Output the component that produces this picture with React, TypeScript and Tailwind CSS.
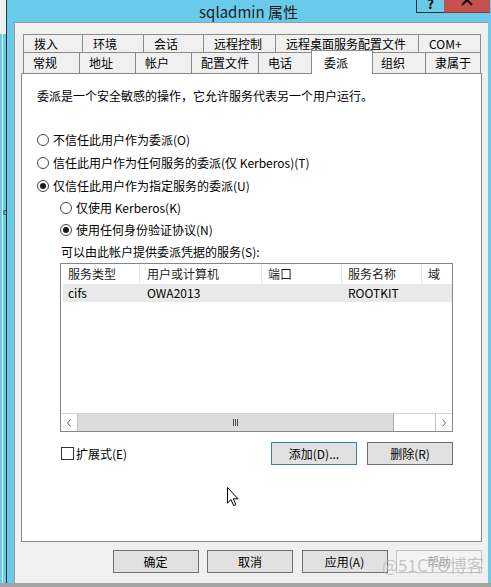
import React from 'react';

const topTabs = [
  { label: '拨入', w: 'w-[59px]' },
  { label: '环境', w: 'w-[61px]' },
  { label: '会话', w: 'w-[60px]' },
  { label: '远程控制', w: 'w-[72px]' },
  { label: '远程桌面服务配置文件', w: 'w-[143px]' },
  { label: 'COM+', w: 'w-[63px] border-r' },
];

const bottomTabs = [
  { label: '常规', w: 'w-[56px]' },
  { label: '地址', w: 'w-[56px]' },
  { label: '帐户', w: 'w-[56px]' },
  { label: '配置文件', w: 'w-[67px]' },
  { label: '电话', w: 'w-[55px]' },
  { label: '委派', w: 'w-[58px]', active: true },
  { label: '组织', w: 'w-[54px]' },
  { label: '隶属于', w: 'w-[56px] border-r' },
];

const Radio: React.FC<{ checked?: boolean; label: string; className?: string }> = ({ checked, label, className }) => (
  <div className={`flex items-center gap-[4px] ${className ?? ''}`}>
    <span className="flex h-[12px] w-[12px] items-center justify-center rounded-full border border-[#444] bg-white">
      {checked && <span className="h-[6px] w-[6px] rounded-full bg-[#1a1a1a]" />}
    </span>
    <span>{label}</span>
  </div>
);

const Button: React.FC<{ label: string; focus?: boolean; disabled?: boolean }> = ({ label, focus, disabled }) => (
  <div
    className={`flex h-[23px] w-[86px] items-center justify-center border ${
      disabled
        ? 'border-[#c4c4c4] bg-[#f4f4f4] text-[#a3a3a3]'
        : focus
          ? 'border-[#3c7fb1] bg-[#e1e1e1]'
          : 'border-[#707070] bg-[#e1e1e1]'
    }`}
  >
    {label}
  </div>
);

export default function App() {
  return (
    <div className="relative flex h-[587px] w-[491px] flex-col overflow-hidden bg-[#67cbe9] font-['Noto_Sans_CJK_SC',sans-serif] text-[12px] leading-none text-black">
      <div className="flex flex-1">
        {/* window behind the dialog */}
        <div className="flex w-[6px] flex-col">
          <div className="h-[34px] bg-[#eef0f2]" />
          <div className="ml-[2px] flex-1 border-l border-[#e9f7fc]">
            <div className="mt-[174px] text-[8px] text-[#222]">c</div>
          </div>
        </div>

        {/* dialog frame */}
        <div className="flex flex-1 flex-col border-l border-[#2d2d2d]">
          {/* title bar */}
          <div className="flex h-[22px]">
            <div className="flex-1" />
            <div className="flex items-center text-[15px] text-[#1b1b1b]">sqladmin 属性</div>
            <div className="flex flex-1 items-start justify-end pr-[1px]">
              <div className="flex h-[13px] w-[28px] justify-center overflow-hidden border-b border-l border-[#2b2b2b]">
                <span className="-mt-[4px] text-[13px] font-bold leading-[16px]">?</span>
              </div>
              <div className="flex h-[13px] w-[46px] justify-center overflow-hidden border-b border-[#8a3a3a] bg-[#c75050]">
                <svg width="12" height="12" viewBox="0 0 12 12" className="-mt-[6px]">
                  <path d="M1 1 L11 11 M11 1 L1 11" stroke="#111" strokeWidth="2.2" />
                </svg>
              </div>
            </div>
          </div>

          {/* client area */}
          <div className="flex flex-1 pl-[7px] pr-[3px]">
            <div className="flex flex-1 flex-col border-l border-t border-[#9c9c9c] bg-[#f0f0f0] px-[6px] pb-[10px] pt-[11px]">
              {/* tabs */}
              <div className="ml-[2px] flex h-[18px]">
                {topTabs.map((t) => (
                  <div key={t.label} className={`flex h-[18px] items-center border-l border-t border-[#8c8c8c] pl-[10px] ${t.w}`}>
                    {t.label}
                  </div>
                ))}
              </div>
              <div className="ml-[2px] flex h-[21px]">
                {bottomTabs.map((t) =>
                  t.active ? (
                    <div key={t.label} className={`relative z-10 h-[21px] ${t.w}`}>
                      <div className="-ml-[2px] -mt-[2px] flex h-[24px] w-[62px] items-center border-l border-r border-t border-[#8c8c8c] bg-white pl-[12px]">
                        {t.label}
                      </div>
                    </div>
                  ) : (
                    <div key={t.label} className={`flex h-[21px] items-center border-l border-t border-[#8c8c8c] pl-[9px] ${t.w}`}>
                      {t.label}
                    </div>
                  ),
                )}
              </div>

              {/* tab page */}
              <div className="flex flex-1 flex-col border border-[#898989] bg-white pl-[15px] pt-[11px]">
                <div className="flex h-[22px] items-center">委派是一个安全敏感的操作，它允许服务代表另一个用户运行。</div>
                <div className="h-[22px]" />
                <Radio className="h-[22px]" label="不信任此用户作为委派(O)" />
                <Radio className="h-[23px]" label="信任此用户作为任何服务的委派(仅 Kerberos)(T)" />
                <Radio className="h-[23px]" checked label="仅信任此用户作为指定服务的委派(U)" />
                <Radio className="ml-[23px] h-[22px]" label="仅使用 Kerberos(K)" />
                <Radio className="ml-[23px] h-[22px]" checked label="使用任何身份验证协议(N)" />
                <div className="ml-[24px] flex h-[22px] items-center">可以由此帐户提供委派凭据的服务(S):</div>

                {/* list view */}
                <div className="ml-[23px] flex h-[169px] w-[393px] flex-col overflow-hidden border border-[#828790] bg-white">
                  <div className="flex h-[19px] text-[#1e1e1e]">
                    <div className="flex w-[79px] shrink-0 items-center border-r border-[#e5e5e5] pl-[7px]">服务类型</div>
                    <div className="flex w-[122px] shrink-0 items-center border-r border-[#e5e5e5] pl-[7px]">用户或计算机</div>
                    <div className="flex w-[80px] shrink-0 items-center border-r border-[#e5e5e5] pl-[6px]">端口</div>
                    <div className="flex w-[80px] shrink-0 items-center border-r border-[#e5e5e5] pl-[6px]">服务名称</div>
                    <div className="flex w-[60px] shrink-0 items-center pl-[6px]">域</div>
                  </div>
                  <div className="ml-[2px] mt-[1px] flex h-[18px] bg-[#e9e9e9]">
                    <div className="flex w-[77px] shrink-0 items-center pl-[5px]">cifs</div>
                    <div className="flex w-[122px] shrink-0 items-center pl-[7px]">OWA2013</div>
                    <div className="w-[80px] shrink-0" />
                    <div className="flex w-[80px] shrink-0 items-center pl-[6px]">ROOTKIT</div>
                  </div>
                  <div className="flex-1" />
                  {/* horizontal scrollbar */}
                  <div className="flex h-[18px] border-t border-[#d4d4d4] bg-[#f7f7f7]">
                    <div className="flex w-[17px] items-center justify-center border-r border-[#c2c2c2] bg-white">
                      <svg width="6" height="8" viewBox="0 0 6 8">
                        <path d="M4.5 0.5 L1.5 4 L4.5 7.5" stroke="#606060" fill="none" />
                      </svg>
                    </div>
                    <div className="flex w-[316px] items-center justify-center border-r border-[#a9a9a9] bg-[#dcdcdc]">
                      <div className="flex gap-[1px]">
                        <span className="h-[7px] w-[1px] bg-[#505050]" />
                        <span className="h-[7px] w-[1px] bg-[#505050]" />
                        <span className="h-[7px] w-[1px] bg-[#505050]" />
                      </div>
                    </div>
                    <div className="flex-1 bg-white" />
                    <div className="flex w-[17px] items-center justify-center border-l border-[#c2c2c2] bg-white">
                      <svg width="6" height="8" viewBox="0 0 6 8">
                        <path d="M1.5 0.5 L4.5 4 L1.5 7.5" stroke="#606060" fill="none" />
                      </svg>
                    </div>
                  </div>
                </div>

                <div className="ml-[24px] mt-[10px] flex h-[23px] w-[392px] items-center">
                  <span className="h-[13px] w-[13px] border border-[#333] bg-white" />
                  <span className="ml-[2px]">扩展式(E)</span>
                  <div className="flex-1" />
                  <Button label="添加(D)..." focus />
                  <div className="w-[10px]" />
                  <Button label="删除(R)" />
                </div>
              </div>

              {/* dialog buttons */}
              <div className="mt-[8px] flex h-[23px] justify-end gap-[8.5px]">
                <Button label="确定" />
                <Button label="取消" />
                <Button label="应用(A)" />
                <Button label="帮助" disabled />
              </div>
            </div>
          </div>
        </div>
      </div>
      <div className="h-[4px] bg-[#a3a3a3]" />

      {/* mouse pointer */}
      <svg className="absolute left-[227px] top-[487px]" width="13" height="20" viewBox="0 0 13 20">
        <path d="M0.5 0.5 L0.5 16 L4 12.6 L6.6 18.6 L8.8 17.6 L6.3 11.8 L11 11.8 Z" fill="#fff" stroke="#000" strokeWidth="1" />
      </svg>

      {/* watermark */}
      <div className="absolute left-[382px] top-[556px] font-['Noto_Sans_CJK_SC',sans-serif] text-[17px] leading-none text-[#b9b9b9]/80">
        @51CTO博客
      </div>
    </div>
  );
}
